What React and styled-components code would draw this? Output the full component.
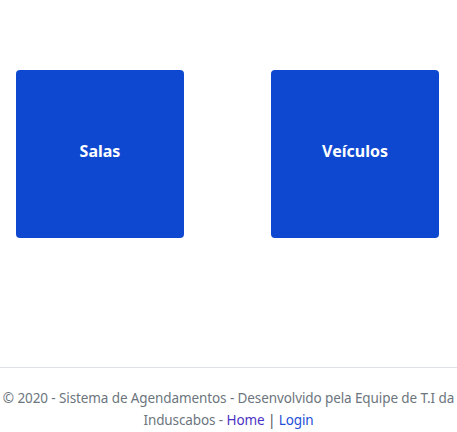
import React from "react";
import styled, { createGlobalStyle } from "styled-components";

const GlobalStyle = createGlobalStyle`
  body {
    margin: 0;
    background: #fff;
    font-family: "Noto Sans", "Open Sans", sans-serif;
  }
`;

const Page = styled.div`
  display: flex;
  flex-direction: column;
  min-height: 432px;
`;

const Tiles = styled.div`
  display: flex;
  gap: 87px;
  padding: 70px 0 0 16px;
  height: 367px;
  box-sizing: border-box;
`;

const Tile = styled.a`
  width: 168px;
  height: 168px;
  display: flex;
  align-items: center;
  justify-content: center;
  padding-bottom: 6px;
  box-sizing: border-box;
  background: #0e48d1;
  border-radius: 4px;
  color: #fff;
  font-size: 16px;
  font-weight: 700;
  text-decoration: none;
`;

const Footer = styled.footer`
  border-top: 1px solid #dee2e6;
  padding-top: 19px;
  text-align: center;
  color: #6c757d;
  font-size: 13.5px;
  line-height: 22px;
  letter-spacing: -0.1px;
`;

const Link = styled.a`
  color: ${({ $visited }) => ($visited ? "#4a33c4" : "#1f4fd6")};
  text-decoration: none;
`;

const Sep = styled.span`
  color: #495057;
`;

const App = () => {
  return (
    <Page>
      <GlobalStyle />
      <Tiles>
        <Tile href="#">Salas</Tile>
        <Tile href="#">Veículos</Tile>
      </Tiles>
      <Footer>
        © 2020 - Sistema de Agendamentos - Desenvolvido pela Equipe de T.I da
        Induscabos - <Link href="#" $visited>Home</Link> <Sep>|</Sep>{" "}
        <Link href="#">Login</Link>
      </Footer>
    </Page>
  );
};

export default App;
